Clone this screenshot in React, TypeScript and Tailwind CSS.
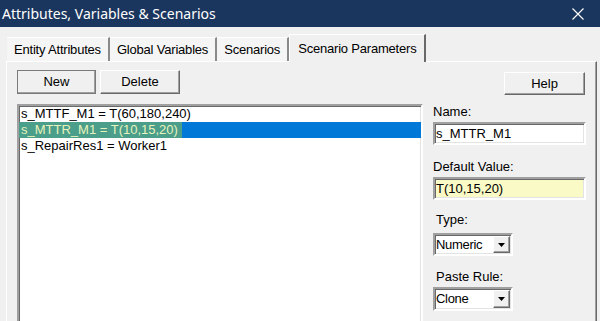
import React from 'react';

const sunken =
  'border-2 border-t-[#a0a0a0] border-l-[#a0a0a0] border-b-white border-r-white shadow-[inset_1px_1px_0_#696969,inset_-1px_-1px_0_#e3e3e3]';
const raised =
  'border border-t-white border-l-white border-b-[#696969] border-r-[#696969] shadow-[inset_-1px_-1px_0_#a0a0a0]';

const TABS = ['Entity Attributes', 'Global Variables', 'Scenarios'];

const ITEMS = [
  { text: 's_MTTF_M1 = T(60,180,240)', selected: false },
  { text: 's_MTTR_M1 = T(10,15,20)', selected: true },
  { text: 's_RepairRes1 = Worker1', selected: false },
];

const Combo: React.FC<{ value: string }> = ({ value }) => (
  <div className={`${sunken} flex h-full w-[80px] bg-white`}>
    <span className="flex-1 pl-px leading-[19px] tracking-[-0.3px]">{value}</span>
    <div className={`${raised} my-px mr-px flex w-[17px] items-center justify-center bg-[#f0f0f0]`}>
      <svg width="7" height="4" viewBox="0 0 7 4">
        <path d="M0 0h7L3.5 4z" fill="#000" />
      </svg>
    </div>
  </div>
);

export default function App() {
  return (
    <div className="flex h-[321px] w-[600px] flex-col overflow-hidden bg-[#f0f0f0] font-['Liberation_Sans',sans-serif] text-[13px] text-black">
      {/* title bar */}
      <div className="flex h-[27px] shrink-0 items-center justify-between bg-[#1b365e] pl-[2px] pr-[16px] text-white">
        <span className="font-['Noto_Sans',sans-serif] text-[14px] leading-none">
          Attributes, Variables &amp; Scenarios
        </span>
        <svg width="12" height="12" viewBox="0 0 12 12">
          <path d="M0.5 0.5l11 11M11.5 0.5l-11 11" stroke="#fff" strokeWidth="1.1" />
        </svg>
      </div>

      {/* tabs */}
      <div className="mt-[7px] flex h-[28px] shrink-0 items-end pl-[7px]">
        {TABS.map((t) => (
          <div
            key={t}
            className="mb-px flex h-[24px] items-center border-t border-r-2 border-t-white border-r-[#8a8a8a] bg-[#f5f5f5] px-[7px] tracking-[-0.2px]"
          >
            {t}
          </div>
        ))}
        <div className="relative z-10 flex h-[28px] items-start border-t border-l border-r-2 border-t-white border-l-white border-r-[#696969] bg-[#f0f0f0] px-[8px] pt-[4px] tracking-[-0.2px]">
          Scenario Parameters
        </div>
      </div>

      {/* panel */}
      <div className="-mt-px ml-[6px] mr-[3px] flex flex-1 border-t border-l border-r border-t-white border-l-white border-r-[#696969] pl-[10px] pt-[8px] shadow-[inset_-1px_0_0_#a0a0a0]">
        <div className="flex w-[406px] flex-col">
          <div className="flex gap-[4px]">
            <button className={`${raised} h-[24px] w-[79px] bg-[#f0f0f0] outline outline-1 -outline-offset-1 outline-[#7a7a7a]`}>
              New
            </button>
            <button className={`${raised} h-[24px] w-[80px] bg-[#f0f0f0]`}>Delete</button>
          </div>
          <div className={`${sunken} mt-[10px] h-[240px] bg-white`}>
            {ITEMS.map((it) =>
              it.selected ? (
                <div key={it.text} className="h-[16px] bg-[#0078d7] leading-[16px]">
                  <span className="inline-block bg-[#4a9e8a] pl-[2px] pr-[4px] text-[#e8f2bc]">{it.text}</span>
                </div>
              ) : (
                <div key={it.text} className="h-[16px] pl-[2px] leading-[16px]">
                  {it.text}
                </div>
              )
            )}
          </div>
        </div>

        <div className="ml-[10px] flex w-[153px] flex-col">
          <button className={`${raised} mr-px mt-[2px] h-[23px] w-[81px] self-end bg-[#f0f0f0]`}>Help</button>

          <div className="mt-[9px] leading-[16px]">Name:</div>
          <div className={`${sunken} mt-[2px] h-[23px] bg-white pl-px leading-[19px]`}>s_MTTR_M1</div>

          <div className="mt-[14px] leading-[16px]">Default Value:</div>
          <div className={`${sunken} mt-[2px] h-[23px] bg-[#fafac6] pl-px leading-[19px]`}>T(10,15,20)</div>

          <div className="mt-[12px] pl-[3px] leading-[16px]">Type:</div>
          <div className="mt-[5px] h-[23px]">
            <Combo value="Numeric" />
          </div>

          <div className="mt-[13px] pl-[3px] leading-[16px]">Paste Rule:</div>
          <div className="mt-[2px] h-[24px]">
            <Combo value="Clone" />
          </div>
        </div>
      </div>
    </div>
  );
}
